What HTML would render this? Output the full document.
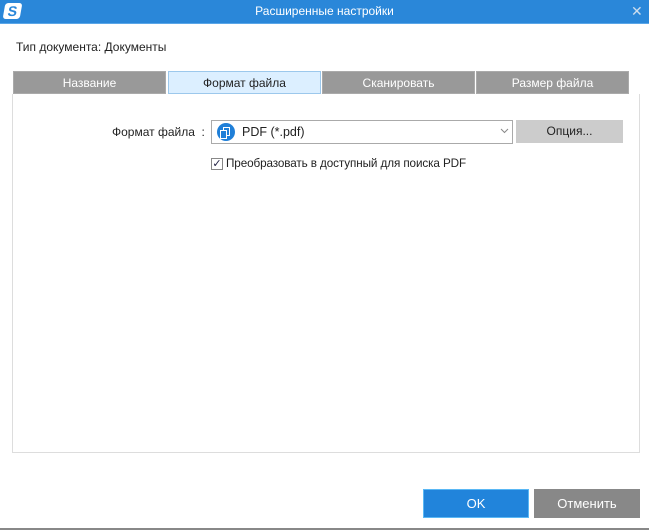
<!DOCTYPE html><html><head><style>
body{margin:0;width:649px;height:530px;background:#fff;font-family:"Liberation Sans",sans-serif;font-size:12px;color:#222;position:relative;overflow:hidden}
div{position:absolute;box-sizing:border-box}
.tab{top:71px;height:23px;width:153px;background:#999;color:#fff;text-align:center;line-height:23px;border:1px solid #aaa}
</style></head><body>
<div style="left:0;top:0;width:649px;height:24px;background:#2a87d9;border-bottom:1px solid #5aa6e8"></div>
<div style="left:4px;top:3px;width:17px;height:16px;background:#fff;border-radius:3px;transform:skewX(-10deg);color:#2a87d9;font-weight:bold;font-size:14px;line-height:16px;text-align:center">S</div>
<div style="left:0;top:4px;width:649px;text-align:center;color:#fff;font-size:12px">Расширенные настройки</div>
<div style="left:631px;top:3px;color:#cde;font-size:14px">✕</div>
<div style="left:16px;top:40px">Тип документа: Документы</div>
<div class="tab" style="left:13px">Название</div>
<div class="tab" style="left:168px;background:#dcefff;color:#222;border-color:#9cc8ec">Формат файла</div>
<div class="tab" style="left:322px">Сканировать</div>
<div class="tab" style="left:476px">Размер файла</div>
<div style="left:12px;top:94px;width:628px;height:359px;border:1px solid #ddd;border-top:none"></div>
<div style="left:112px;top:125px">Формат файла &nbsp;:</div>
<div style="left:211px;top:120px;width:302px;height:24px;border:1px solid #aaa"></div>
<div style="left:217px;top:123px;width:18px;height:18px;border-radius:50%;background:#1f7fd8"></div>
<div style="left:223px;top:127px;width:7px;height:9px;border:1.5px solid #fff"></div>
<div style="left:220px;top:130px;width:7px;height:9px;border:1.5px solid #fff;background:#1f7fd8"></div>
<div style="left:242px;top:125px;font-size:12.5px">PDF (*.pdf)</div>
<svg style="position:absolute;left:500px;top:128px" width="9" height="6"><path d="M1 1L4.5 4.5L8 1" stroke="#888" fill="none"/></svg>
<div style="left:516px;top:120px;width:107px;height:23px;background:#ccc;text-align:center;line-height:23px">Опция...</div>
<div style="left:211px;top:158px;width:12px;height:12px;border:1px solid #888;font-size:11px;line-height:10px;text-align:center;color:#224">✓</div>
<div style="left:226px;top:157px;font-size:11.7px;letter-spacing:-0.1px">Преобразовать в доступный для поиска PDF</div>
<div style="left:423px;top:489px;width:106px;height:29px;background:#2184db;border:1px solid #5ab8f5;color:#fff;text-align:center;line-height:27px;font-size:13px">OK</div>
<div style="left:534px;top:489px;width:106px;height:29px;background:#888;color:#fff;text-align:center;line-height:29px;font-size:13px">Отменить</div>
<div style="left:0;top:528px;width:649px;height:2px;background:#888"></div>
</body></html>
